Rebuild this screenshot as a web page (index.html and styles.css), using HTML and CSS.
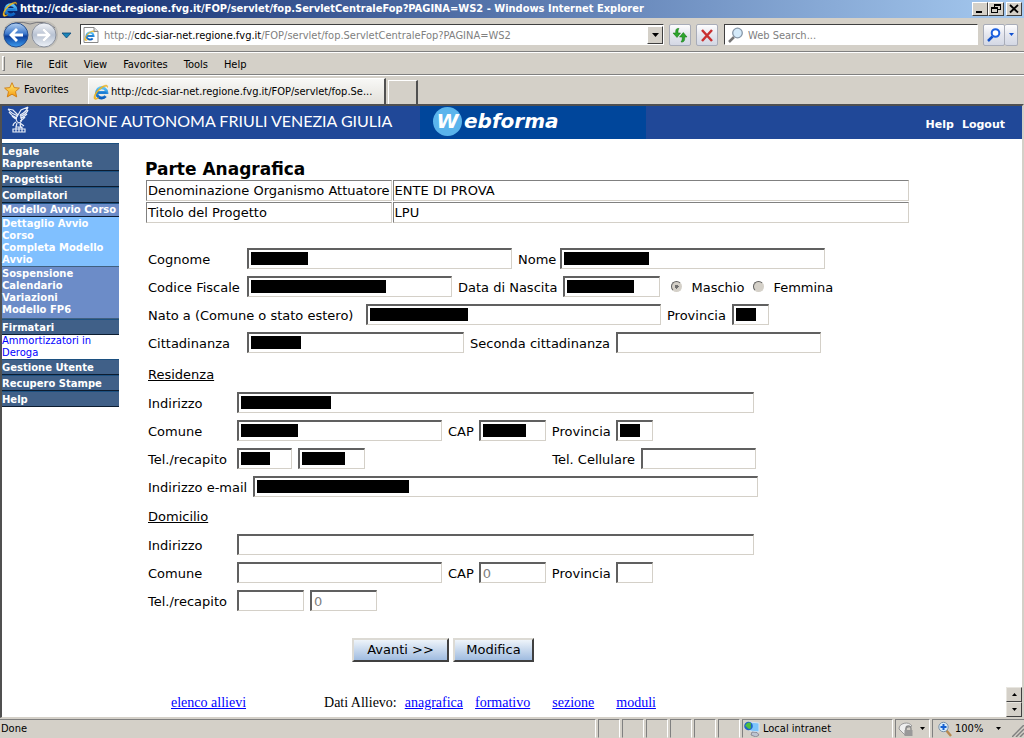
FILE: index.html
```html
<!DOCTYPE html>
<html lang="it">
<head>
<meta charset="utf-8">
<title>Parte Anagrafica</title>
<link rel="stylesheet" href="styles.css">
</head>
<body>
<svg class="defs" aria-hidden="true">
  <defs>
    <linearGradient id="blue" x1="0" y1="0" x2="0" y2="1"><stop offset="0" stop-color="#5cc4f8"/><stop offset="1" stop-color="#0a5fc0"/></linearGradient>
    <linearGradient id="orbBlue" x1="0" y1="0" x2="0" y2="1"><stop offset="0" stop-color="#b4d0f0"/><stop offset=".45" stop-color="#3c78cc"/><stop offset=".55" stop-color="#0c3f9c"/><stop offset="1" stop-color="#3c9cf0"/></linearGradient>
    <linearGradient id="orbGray" x1="0" y1="0" x2="0" y2="1"><stop offset="0" stop-color="#f4f6fa"/><stop offset=".5" stop-color="#b8c2d2"/><stop offset="1" stop-color="#eef2f8"/></linearGradient>
    <linearGradient id="gold" x1="0" y1="0" x2="0" y2="1"><stop offset="0" stop-color="#fff07a"/><stop offset="1" stop-color="#f59a10"/></linearGradient>
    <symbol id="ie" viewBox="0 0 16 16">
      <path d="M4 8.600h9.800a5.100 5.100 0 1 0-1.200 3.500" fill="none" stroke="url(#blue)" stroke-width="3"/>
      <path d="M4 8.600h9.500" stroke="#1c7cd4" stroke-width="2"/>
      <path d="M1.400 15C-.6 12.500 4.500 4.500 10 2c3-1.500 5.300-1 4.500 1.500C14.400 1.900 12.600 2 10.600 3 6 5.300 1.500 11 2.600 13.600c.5 1 2 .7 3.400 0-1.500 1.400-3.600 2.400-4.600 1.400z" fill="#f8c428" stroke="#d8980c" stroke-width=".4"/>
    </symbol>
  </defs>
</svg>

<header class="titlebar">
  <svg class="ico16" aria-hidden="true"><use href="#ie"/></svg>
  <span class="title">http://cdc-siar-net.regione.fvg.it/FOP/servlet/fop.ServletCentraleFop?PAGINA=WS2 - Windows Internet Explorer</span>
  <div class="winbuttons">
    <button class="winbtn" aria-label="Minimize"><svg viewBox="0 0 12 10"><path d="M2 7h6v2H2z"/></svg></button>
    <button class="winbtn" aria-label="Restore"><svg viewBox="0 0 12 10"><path d="M4 0h7v6H8V5h2V2H5v1H4zM1 3h7v6H1zM2 5v3h5V5z" fill-rule="evenodd"/></svg></button>
    <button class="winbtn close" aria-label="Close"><svg viewBox="0 0 12 10"><path d="M2 1l8 7.500M10 1L2 8.500" stroke="#000" stroke-width="1.800"/></svg></button>
  </div>
</header>

<div class="navbar">
  <svg class="orbs" viewBox="0 0 72 30" role="img" aria-label="Back and forward">
    <rect x="1" y="1" width="55" height="27" rx="13" fill="#c0bdb6"/>
    <path d="M3 8Q14-1 28 4Q42-1 53 8" fill="none" stroke="#77777c"/>
    <circle cx="14" cy="15" r="12" fill="url(#orbBlue)" stroke="#27508f"/>
    <path d="M7 15l7-7 2 2-3.500 3.500H21v3h-8.500L16 20l-2 2z" fill="#fff"/>
    <circle cx="42" cy="15" r="12" fill="url(#orbGray)" stroke="#8b919d"/>
    <path d="M49 15l-7-7-2 2 3.500 3.500H35v3h8.500L40 20l2 2z" fill="#fff" stroke="#c3c9d5" stroke-width=".5"/>
    <path d="M60 13h9l-4.500 5z" fill="#1b86b8" stroke="#0a4878" stroke-width=".8"/>
  </svg>
  <div class="address">
    <svg class="ico16" viewBox="0 0 16 16" aria-hidden="true"><path d="M1 .5h10l4 4v11H1z" fill="#fff" stroke="#888"/><path d="M11 .5v4h4" fill="#ddd" stroke="#888"/><use href="#ie" x="1" y="3" width="11" height="11"/></svg>
    <span class="url">http://<b>cdc-siar-net.regione.fvg.it</b>/FOP/servlet/fop.ServletCentraleFop?PAGINA=WS2</span>
    <button class="drop" aria-label="Show addresses"><svg viewBox="0 0 7 4"><path d="M0 0h7L3.500 4z"/></svg></button>
  </div>
  <button class="tool" aria-label="Refresh"><svg viewBox="0 0 16 16"><path d="M7 1.500C4 1 3.500 3 3.700 6H1l4 4.500L8.500 6H6c0-2 0-3 1-4.500zM9 15c3 .5 4-1.500 3.700-5H15l-3.700-4.500L7.500 10h2.700c.1 2 0 3.500-1.200 5z" fill="#2da52d" stroke="#0c700c" stroke-width=".5"/></svg></button>
  <button class="tool" aria-label="Stop"><svg viewBox="0 0 16 16"><path d="M3 3l10 11M13 3L3 14" stroke="#c93030" stroke-width="2.500"/></svg></button>
  <div class="search">
    <svg class="ico16" viewBox="0 0 16 16" aria-hidden="true"><path d="M6 10l-5 5" stroke="#777" stroke-width="2.500"/><circle cx="9.500" cy="6" r="4.800" fill="#d4eafa" stroke="#8797a8" stroke-width="1.300"/></svg>
    <input class="searchbox" aria-label="Web Search" placeholder="Web Search...">
  </div>
  <div class="searchgo">
    <button class="tool" aria-label="Search"><svg viewBox="0 0 16 16"><path d="M6.500 9.500L2 14" stroke="#1050c8" stroke-width="2.500"/><circle cx="9.500" cy="6" r="3.800" fill="#fff" stroke="#1c60e0" stroke-width="2"/></svg></button>
    <button class="tool slim" aria-label="Search options"><svg viewBox="0 0 7 4"><path d="M1 0h5L3.500 3z" fill="#1050d0"/></svg></button>
  </div>
</div>

<nav class="menubar">
  <span class="grip"></span>
  <button>File</button><button>Edit</button><button>View</button><button>Favorites</button><button>Tools</button><button>Help</button>
</nav>

<div class="tabbar">
  <button class="fav"><svg class="ico16" viewBox="0 0 16 16"><path d="M8 .7l2.200 4.900 5.200.5-3.900 3.500 1.200 5.300L8 12.200l-4.700 2.700 1.200-5.300L.6 6.100l5.200-.5z" fill="url(#gold)" stroke="#d07c10" stroke-width=".9"/></svg>Favorites</button>
  <div class="tab"><svg class="ico16" aria-hidden="true"><use href="#ie"/></svg><span>http://cdc-siar-net.regione.fvg.it/FOP/servlet/fop.Se...</span></div>
  <div class="newtab"></div>
</div>

<div class="page">
  <div class="banner">
    <svg class="eagle" viewBox="0 0 24 28" aria-hidden="true">
      <g fill="none" stroke="#e8edf8" stroke-width="1.200">
        <path d="M1 3c2 3 5 5 10 7M2 6c2 3 5 5 8 6M5 10c2 2 3 3 5 3M1 3l5 1 5 5"/>
        <path d="M21 1c-1 4-4 6-8 8M21 1l-7 3-3 5M21 4c-1 3-4 5-7 6M20 8c-2 2-4 4-7 4M18 11c-1 2-3 3-5 4"/>
        <path d="M11 9c-3 3-2 7 1 8 3-1 4-4 1-8M9 16c-2 1-3 2-3 4M13 17l4 3M10 17l-1 4M13 18l1 4M6 26v-3h3v-2h6v2h3v3zM9 23h6M12 21v5M9 23v3M15 23v3"/>
      </g>
    </svg>
    <span class="region">REGIONE AUTONOMA FRIULI VENEZIA GIULIA</span>
    <div class="webforma"><span class="disc">W</span><span>ebforma</span></div>
    <nav class="session"><a href="#">Help</a><a href="#">Logout</a></nav>
  </div>

  <div class="columns">
    <nav class="side">
      <a class="item" href="#">Legale Rappresentante</a>
      <a class="item" href="#">Progettisti</a>
      <a class="item" href="#">Compilatori</a>
      <a class="item current" href="#">Modello Avvio Corso</a>
      <div class="sub light"><a href="#">Dettaglio Avvio Corso</a><a href="#">Completa Modello Avvio</a></div>
      <div class="sub"><a href="#">Sospensione</a><a href="#">Calendario</a><a href="#">Variazioni</a><a href="#">Modello FP6</a></div>
      <a class="item" href="#">Firmatari</a>
      <a class="plain" href="#">Ammortizzatori in Deroga</a>
      <a class="item" href="#">Gestione Utente</a>
      <a class="item" href="#">Recupero Stampe</a>
      <a class="item" href="#">Help</a>
    </nav>

    <main class="main">
      <h1>Parte Anagrafica</h1>
      <table class="summary">
        <tr><th scope="row">Denominazione Organismo Attuatore</th><td>ENTE DI PROVA</td></tr>
        <tr><th scope="row">Titolo del Progetto</th><td>LPU</td></tr>
      </table>

      <form class="form">
        <div class="row"><label class="lead wide" for="cog">Cognome</label><span class="field w265"><input id="cog"><i class="mask m57"></i></span><label class="short" for="nom">Nome</label><span class="field w265"><input id="nom"><i class="mask m85"></i></span></div>
        <div class="row"><label class="lead wide" for="cf">Codice Fiscale</label><span class="field w205"><input id="cf"><i class="mask m135"></i></span><label for="nas">Data di Nascita</label><span class="field w97"><input id="nas"><i class="mask m67"></i></span>
          <div class="sex"><input type="radio" name="sex" id="m" checked disabled><label for="m">Maschio</label><input type="radio" name="sex" id="f" disabled><label for="f">Femmina</label></div></div>
        <div class="row"><label class="lead widest" for="nato">Nato a (Comune o stato estero)</label><span class="field w295"><input id="nato"><i class="mask m98"></i></span><label for="pr1">Provincia</label><span class="field w37"><input id="pr1"><i class="mask m20"></i></span></div>
        <div class="row"><label class="lead wide" for="cit">Cittadinanza</label><span class="field w217"><input id="cit"><i class="mask m50"></i></span><label for="cit2">Seconda cittadinanza</label><span class="field w205"><input id="cit2"></span></div>

        <h2>Residenza</h2>
        <div class="row"><label class="lead" for="ind">Indirizzo</label><span class="field w517"><input id="ind"><i class="mask m90"></i></span></div>
        <div class="row tight"><label class="lead" for="com">Comune</label><span class="field w205"><input id="com"><i class="mask m57"></i></span><label for="cap">CAP</label><span class="field w67"><input id="cap"><i class="mask m43"></i></span><label for="pr2">Provincia</label><span class="field w37"><input id="pr2"><i class="mask m20"></i></span></div>
        <div class="row contacts"><label class="lead" for="tel">Tel./recapito</label><span class="field w55"><input id="tel"><i class="mask m29"></i></span><span class="field w67"><input aria-label="Numero"><i class="mask m43"></i></span><label class="push" for="cel">Tel. Cellulare</label><span class="field w115"><input id="cel"></span></div>
        <div class="row"><label for="mail">Indirizzo e-mail</label><span class="field w505"><input id="mail"><i class="mask m152"></i></span></div>

        <h2 class="second">Domicilio</h2>
        <div class="row"><label class="lead" for="ind2">Indirizzo</label><span class="field w517"><input id="ind2"></span></div>
        <div class="row tight"><label class="lead" for="com2">Comune</label><span class="field w205"><input id="com2"></span><label for="cap2">CAP</label><span class="field w67"><input id="cap2" value="0" disabled></span><label for="pr3">Provincia</label><span class="field w37"><input id="pr3"></span></div>
        <div class="row"><label class="lead" for="tel2">Tel./recapito</label><span class="field w67"><input id="tel2"></span><span class="field w67"><input aria-label="Numero" value="0" disabled></span></div>

        <div class="actions"><button type="button" class="next">Avanti &gt;&gt;</button><button type="button">Modifica</button></div>
      </form>

      <nav class="links"><a class="list" href="#">elenco allievi</a><span>Dati Allievo:</span><a href="#">anagrafica</a><a href="#">formativo</a><a class="far" href="#">sezione</a><a class="far" href="#">moduli</a></nav>
    </main>
  </div>
  <div class="spin"><button aria-label="Scroll up"><svg viewBox="0 0 5 3"><path d="M0 3h5L2.500 0z"/></svg></button><button aria-label="Scroll down"><svg viewBox="0 0 5 3"><path d="M0 0h5L2.500 3z"/></svg></button></div>
</div>

<footer class="status">
  <span class="pane done">Done</span>
  <span class="pane cell"></span><span class="pane cell"></span><span class="pane cell"></span><span class="pane cell"></span><span class="pane cell"></span><span class="pane cell"></span>
  <span class="pane zone"><svg class="ico16" viewBox="0 0 16 16" aria-hidden="true"><path d="M5 1l10 1v9l-9-1z" fill="#7cc4fb" stroke="#d8e4f0"/><path d="M8 11l5 .5 2 2.500-3 2-5-2z" fill="#bcc4d0" stroke="#667" stroke-width=".6"/><circle cx="4.500" cy="5" r="4.300" fill="#1f63c8"/><path d="M1 5c2-4 4-4 6-3-1 3 1 4-1 6-3 0-3-3-5-3z" fill="#4fbf3c"/></svg>Local intranet</span>
  <span class="pane lock"><svg class="ico16" viewBox="0 0 16 16" aria-hidden="true"><path d="M1 8a7 6 0 0 1 13-3l-6 2-1 7z" fill="#eee" stroke="#999"/><path d="M8 9V7.500a2.500 2.500 0 0 1 5 0V9" fill="none" stroke="#888" stroke-width="1.300"/><rect x="6.500" y="9" width="8" height="6" fill="#999"/></svg><svg class="arrow" viewBox="0 0 5 3"><path d="M0 0h5L2.500 3z"/></svg></span>
  <span class="pane zoom"><svg class="ico16" viewBox="0 0 16 16" aria-hidden="true"><path d="M9 9l5 6" stroke="#b88a50" stroke-width="2.500"/><circle cx="6.500" cy="6" r="4.700" fill="#d8ecfb" stroke="#7890a8"/><path d="M6.500 3v6M3.500 6h6" stroke="#1460d0" stroke-width="2"/></svg>100%<svg class="arrow" viewBox="0 0 5 3"><path d="M0 0h5L2.500 3z"/></svg><svg class="corner" viewBox="0 0 12 12" aria-hidden="true"><path d="M0 12L12 0M4 12l8-8M8 12l4-4" stroke="#808080" stroke-width="1.500"/></svg></span>
</footer>
</body>
</html>
```

FILE: styles.css
```css
* { box-sizing: border-box; }
body {
  margin: 0;
  min-height: 100vh;
  display: flex;
  flex-direction: column;
  background: #d4d0c8;
  color: #000;
  font: 11px/14px "DejaVu Sans Condensed", "DejaVu Sans", sans-serif;
}
button { font: inherit; color: inherit; margin: 0; padding: 0; border: 0; background: none; }
input { font: inherit; margin: 0; }
.defs { position: absolute; width: 0; height: 0; }
.ico16 { width: 16px; height: 16px; flex: none; }

/* Title bar */
.titlebar {
  display: flex; align-items: center; gap: 2px;
  height: 18px; padding: 0 2px;
  background: linear-gradient(90deg, #0a246a, #a6caf0);
  color: #fff;
}
.title { flex: 1; font-weight: bold; white-space: nowrap; overflow: hidden; }
.winbuttons { display: flex; }
.winbtn {
  width: 16px; height: 14px; display: flex; align-items: center; justify-content: center;
  background: #d4d0c8; border: 1px solid; border-color: #fff #404040 #404040 #fff;
}
.winbtn svg { width: 12px; height: 10px; }
.close { margin-left: 2px; }

/* Address row */
.navbar {
  display: flex; align-items: center; gap: 5px;
  height: 34px; padding: 0 6px 0 2px;
  border-bottom: 1px solid #808080;
}
.orbs { width: 72px; height: 30px; flex: none; }
.address, .search {
  display: flex; align-items: center; height: 21px; background: #fff;
  border: 1px solid; border-color: #404040 #fff #fff #404040;
}
.address { flex: 1; gap: 5px; padding-left: 2px; margin-left: 1px; }
.url { flex: 1; padding-top: 2px; color: #808080; white-space: nowrap; overflow: hidden; }
.url b { color: #000; font-weight: normal; }
.drop {
  width: 16px; height: 18px; display: flex; align-items: center; justify-content: center;
  background: #d4d0c8; border: 1px solid; border-color: #fff #404040 #404040 #fff;
}
.drop svg { width: 7px; height: 4px; }
.tool {
  width: 22px; height: 22px; display: flex; align-items: center; justify-content: center;
  border: 1px solid #a8acb8; border-radius: 2px;
  background: linear-gradient(#fdfdfe, #e4e6ee 50%, #d4d8e4);
}
.tool svg { width: 16px; height: 16px; }
.search { width: 254px; gap: 4px; padding-left: 3px; margin-left: 1px; }
.searchbox { flex: 1; min-width: 0; border: 0; padding: 2px 0 0; outline: 0; }
.searchbox::placeholder { color: #808080; opacity: 1; }
.searchgo { display: flex; }
.tool.slim { width: 13px; border-left: 0; }
.slim svg { width: 7px; height: 4px; flex: none; }

/* Menu and tabs */
.menubar {
  display: flex; align-items: center; gap: 16px; height: 23px; padding-left: 2px;
  border-top: 1px solid #fff; border-bottom: 1px solid #808080;
}
.menubar button { padding-top: 2px; }
.grip { width: 3px; height: 15px; margin-right: -5px; border: 1px solid; border-color: #fff #808080 #808080 #fff; }
.tabbar { display: flex; align-items: flex-end; height: 29px; padding-left: 4px; border-top: 1px solid #fff; }
.fav { display: flex; align-items: center; gap: 4px; width: 84px; height: 28px; }
.tab {
  display: flex; align-items: center; gap: 2px; width: 298px; height: 26px; padding-left: 4px;
  background: linear-gradient(#f8f8f6, #e2e0da);
  border: 1px solid; border-width: 1px 2px 0 1px; border-color: #fff #505050 #fff #fff;
}
.tab span { white-space: nowrap; overflow: hidden; }
.newtab { width: 30px; height: 24px; margin-left: 2px; border: 1px solid; border-width: 1px 2px 0 1px; border-color: #fff #505050 #fff #fff; }

/* Web page */
.page {
  position: relative; flex: 1; display: flex; flex-direction: column;
  background: #fff; border: 1px solid; border-width: 2px 2px 1px 2px;
  border-color: #505050 #d4d0c8 #d4d0c8 #505050;
  font-family: "DejaVu Sans", Verdana, sans-serif; font-size: 13px; line-height: 16px;
}
.banner { display: flex; align-items: stretch; height: 33px; padding-right: 17px; background: #204898; color: #fff; }
.eagle { width: 24px; height: 28px; margin-left: 5px; }
.region { width: 347px; margin: 0 25px 0 17px; font: 16px/30px Lato, sans-serif; white-space: nowrap; }
.webforma {
  display: flex; align-items: center; width: 226px; padding-left: 13px; padding-bottom: 3px;
  background: #00469b; font: italic bold 20px/28px "DejaVu Sans", sans-serif;
}
.disc { width: 29px; height: 29px; margin-right: 2px; border-radius: 50%; background: #5ab4ec; text-align: center; }
.session { display: flex; align-items: center; gap: 8px; margin-left: auto; padding-top: 4px; font-size: 11px; font-weight: bold; }
.session a { color: #fff; text-decoration: none; }

.columns { display: flex; flex: 1; }
.side { width: 117px; flex: none; padding-top: 4px; font-size: 10px; line-height: 12px; font-weight: bold; }
.side a { display: block; text-decoration: none; color: #fff; }
.side .item {
  padding: 2px 0 0; background: #406088;
  border-top: 1px solid #1c5080; border-bottom: 1px solid #0c1c30;
}
.side .current { padding: 0; background: #6c8cc8; white-space: nowrap; }
.sub { padding: 1px 0 2px; background: #6c8cc8; border-bottom: 1px solid #406080; }
.sub.light { padding: 1px 0 0; background: #80c0ff; }
.side .plain { color: #00f; font-weight: normal; }

.main { flex: 1; min-width: 0; padding: 21px 0 0 26px; }
h1 { margin: 0; font-size: 17px; line-height: 18px; }
.summary { width: 100%; max-width: 765px; border-spacing: 1px 1px; margin-top: 1px; border-collapse: separate; }
.summary th, .summary td {
  height: 21px; padding: 0 1px; text-align: left; font-weight: normal;
  border: 1px solid; border-color: #808080 #d4d0c8 #d4d0c8 #808080;
}
.summary th { width: 244px; white-space: nowrap; }

.form { display: flex; flex-direction: column; gap: 7px; padding: 24px 0 0 3px; }
.row { display: flex; align-items: center; gap: 6px; height: 21px; white-space: nowrap; }
.row label { padding-top: 3px; }
.row .lead { width: 83px; }
.row .wide { width: 93px; }
.row .widest { width: 212px; }
.row .short { width: 36px; }
.tight label + .field { margin-left: -1px; }
.tight .lead + .field { margin-left: 0; }
.contacts { width: 608px; }
.push { margin-left: auto; }
.field { position: relative; display: flex; flex: none; height: 21px; }
.field input {
  width: 100%; height: 21px; padding: 1px 2px; background: #fff;
  border: 2px solid; border-color: #606060 #d4d0c8 #d4d0c8 #606060;
  border-right-width: 1px; border-bottom-width: 1px;
}
.field input:disabled { color: #808080; }
.mask { position: absolute; left: 4px; top: 4px; height: 13px; background: #000; }
.w37 { width: 37px; } .w55 { width: 55px; } .w67 { width: 67px; } .w97 { width: 97px; }
.w115 { width: 115px; } .w205 { width: 205px; } .w217 { width: 217px; } .w265 { width: 265px; }
.w295 { width: 295px; } .w505 { width: 505px; } .w517 { width: 517px; }
.m20 { width: 20px; } .m29 { width: 29px; } .m43 { width: 43px; } .m50 { width: 50px; }
.m57 { width: 57px; } .m67 { width: 67px; } .m85 { width: 85px; } .m90 { width: 90px; }
.m98 { width: 98px; } .m135 { width: 135px; } .m152 { width: 152px; }
.sex { display: flex; align-items: center; gap: 9px; margin-left: 5px; }
.sex input {
  appearance: none; width: 11px; height: 11px; border-radius: 50%;
  border: 1px solid; border-color: #606060 #d4d0c8 #d4d0c8 #606060; background: #d4d0c8;
}
.sex input:checked { background: radial-gradient(circle, #707070 2px, #d4d0c8 2px); }
h2 { margin: 7px 0 2px; font-size: 13px; line-height: 16px; font-weight: normal; text-decoration: underline; }
.second { margin-top: 5px; }

.actions { display: flex; gap: 4px; margin: 20px 0 0 204px; }
.actions button {
  width: 81px; height: 24px; background: linear-gradient(#eef4fa, #a0bce0);
  border: 2px solid; border-color: #dcdad4 #404040 #404040 #dcdad4;
}
.actions .next { width: 97px; }
.links {
  display: flex; gap: 12px; padding: 31px 0 0 26px;
  font: 14px/20px "Liberation Serif", "Times New Roman", serif; white-space: nowrap;
}
.links a { color: #00f; }
.links span { margin-right: -4px; }
.links .list { margin-right: 66px; }
.links .far { margin-left: 10px; }
.spin { position: absolute; right: 0; bottom: 0; width: 16px; }
.spin button {
  display: flex; align-items: center; justify-content: center; width: 16px; height: 15px;
  background: #d4d0c8; border: 1px solid; border-color: #e8e6e0 #404040 #404040 #e8e6e0;
}
.spin svg, .arrow { width: 5px; height: 3px; }

/* Status bar */
.status { display: flex; gap: 2px; height: 20px; padding-top: 1px; }
.pane { display: flex; align-items: center; height: 19px; border: 1px solid; border-color: #808080 #fff #d4d0c8 #808080; }
.done { flex: 1; border-left: 0; padding-left: 1px; }
.cell { width: 22px; }
.zone { width: 151px; gap: 3px; padding-left: 1px; }
.lock { width: 35px; gap: 6px; padding-left: 2px; }
.zoom { width: 92px; gap: 2px; padding-left: 4px; border-right: 0; }
.zoom .arrow { margin-left: auto; }
.corner { width: 12px; height: 12px; margin-left: 9px; align-self: flex-end; }
```
